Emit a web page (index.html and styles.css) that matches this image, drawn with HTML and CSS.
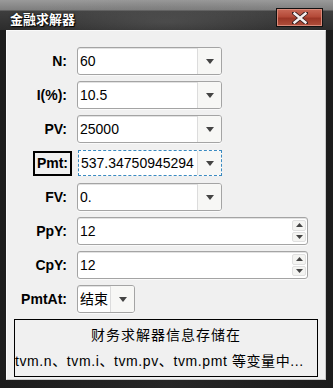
FILE: index.html
```html
<!DOCTYPE html>
<html>
<head>
<meta charset="utf-8">
<link rel="stylesheet" href="styles.css">
</head>
<body>
<div class="window">
  <div class="titlebar">
    <span class="title">金融求解器</span>
    <button class="close"><svg width="16" height="12" viewBox="0 0 16 12"><path d="M2 1 L14 11 M14 1 L2 11" stroke="#3a2020" stroke-width="4.2" stroke-linecap="square"/><path d="M2.5 1.5 L13.5 10.5 M13.5 1.5 L2.5 10.5" stroke="#f4f0f0" stroke-width="2.4" stroke-linecap="square"/></svg></button>
  </div>
  <div class="client">
    <div class="form">
      <span class="label">N:</span>
      <div class="field combo"><span class="value">60</span><span class="drop"><svg width="8" height="5" viewBox="0 0 8 5"><polygon points="0,0 8,0 4,5" fill="#444"/></svg></span></div>

      <span class="label">I(%):</span>
      <div class="field combo"><span class="value">10.5</span><span class="drop"><svg width="8" height="5" viewBox="0 0 8 5"><polygon points="0,0 8,0 4,5" fill="#444"/></svg></span></div>

      <span class="label">PV:</span>
      <div class="field combo"><span class="value">25000</span><span class="drop"><svg width="8" height="5" viewBox="0 0 8 5"><polygon points="0,0 8,0 4,5" fill="#444"/></svg></span></div>

      <span class="label boxed">Pmt:</span>
      <div class="field combo focus"><span class="value">537.34750945294</span><span class="drop"><svg width="8" height="5" viewBox="0 0 8 5"><polygon points="0,0 8,0 4,5" fill="#444"/></svg></span></div>

      <span class="label">FV:</span>
      <div class="field combo"><span class="value">0.</span><span class="drop"><svg width="8" height="5" viewBox="0 0 8 5"><polygon points="0,0 8,0 4,5" fill="#444"/></svg></span></div>

      <span class="label">PpY:</span>
      <div class="field spin"><span class="value">12</span><span class="spinner"><span class="sb"><svg width="7" height="4" viewBox="0 0 7 4"><polygon points="0,4 7,4 3.5,0" fill="#444"/></svg></span><span class="sb"><svg width="7" height="4" viewBox="0 0 7 4"><polygon points="0,0 7,0 3.5,4" fill="#444"/></svg></span></span></div>

      <span class="label">CpY:</span>
      <div class="field spin"><span class="value">12</span><span class="spinner"><span class="sb"><svg width="7" height="4" viewBox="0 0 7 4"><polygon points="0,4 7,4 3.5,0" fill="#444"/></svg></span><span class="sb"><svg width="7" height="4" viewBox="0 0 7 4"><polygon points="0,0 7,0 3.5,4" fill="#444"/></svg></span></span></div>

      <span class="label">PmtAt:</span>
      <div class="field combo small"><span class="value cjk">结束</span><span class="drop"><svg width="8" height="5" viewBox="0 0 8 5"><polygon points="0,0 8,0 4,5" fill="#444"/></svg></span></div>
    </div>
    <div class="message">
      <div class="line1">财务求解器信息存储在</div>
      <div class="line2">tvm.n、tvm.i、tvm.pv、tvm.pmt 等变量中...</div>
    </div>
  </div>
</div>
</body>
</html>
```
FILE: styles.css
```css
html, body {
  margin: 0;
  padding: 0;
}
body {
  width: 333px;
  height: 388px;
  overflow: hidden;
  background: #1f1f1f;
  font-family: "Liberation Sans", Arial, "Noto Sans CJK SC", sans-serif;
}
.window {
  display: flex;
  flex-direction: column;
  height: 388px;
  background: linear-gradient(90deg, #1c1c1c 0, #262626 50%, #1c1c1c 100%);
}
.titlebar {
  height: 30px;
  display: flex;
  align-items: flex-start;
  justify-content: space-between;
  background:
    radial-gradient(ellipse 160px 26px at 50% 22px, rgba(120,120,120,0.35), rgba(0,0,0,0)),
    linear-gradient(#9a9a9a 0, #7e7e7e 10px, #3e3e3e 11px, #2c2c2c 30px);
}
.title {
  margin: 10px 0 0 10px;
  color: #fff;
  font-family: "Noto Sans CJK SC", sans-serif;
  font-size: 13px;
  font-weight: 700;
  line-height: 18px;
  text-shadow: 0 0 2px #000, 1px 1px 1px #000;
}
.close {
  margin: 8px 10px 0 0;
  width: 47px;
  height: 19px;
  padding: 0;
  border: 1px solid #111;
  box-shadow: inset 0 0 0 1px #d98a7a;
  background: linear-gradient(#c96a58 0, #b44a38 45%, #9c3626 55%, #b0503c 100%);
  display: flex;
  align-items: center;
  justify-content: center;
}
.close svg { display: block; }
.client {
  margin: 0 7px 0 6px;
  height: 350px;
  background: #f0f0f0;
  border-top: 1px solid #fafafa;
  border-left: 1px solid #fafafa;
  border-right: 1px solid #c8c8c8;
  border-bottom: 1px solid #c8c8c8;
  box-sizing: border-box;
  display: flex;
  flex-direction: column;
}
.form {
  display: grid;
  grid-template-columns: 60px auto;
  column-gap: 10px;
  row-gap: 6px;
  padding-top: 16px;
  align-items: center;
  justify-items: start;
}
.label {
  justify-self: end;
  font-size: 14px;
  font-weight: 700;
  color: #000;
}
.label.boxed {
  border: 2px solid #000;
  padding: 1px 2px 2px 2px;
  margin-right: -5px;
  line-height: 18px;
}
.field {
  height: 28px;
  box-sizing: border-box;
  background: #fff;
  border: 1px solid #a4a4a4;
  border-radius: 3px;
  box-shadow: inset 0 1px 0 #e2e2e2, 0 1px 0 #fafafa;
  display: flex;
  align-items: stretch;
}
.combo { width: 145px; }
.spin { width: 231px; }
.small { width: 58px; }
.value {
  flex: 1;
  padding-left: 2px;
  font-size: 14px;
  line-height: 26px;
  color: #000;
  white-space: nowrap;
  overflow: hidden;
}
.value.cjk {
  font-family: "Noto Sans CJK SC", sans-serif;
  font-size: 14px;
  line-height: 25px;
}
.drop {
  width: 23px;
  background: #f7f7f5;
  border-left: 1px solid #dcdcdc;
  border-radius: 0 2px 2px 0;
  display: flex;
  align-items: center;
  justify-content: center;
}
.drop svg { display: block; }
.focus {
  height: 26px;
  margin: 1px 0 1px 1px;
  width: 144px;
  border: 1px dashed #3a8ac0;
  border-radius: 0;
  box-shadow: none;
}
.focus .value { line-height: 24px; }
.spinner {
  width: 14px;
  margin: 2px 1px 2px 0;
  display: flex;
  flex-direction: column;
  gap: 1px;
}
.sb {
  flex: 1;
  background: #f4f4f2;
  border: 1px solid #e0e0e0;
  border-radius: 2px;
  display: flex;
  align-items: center;
  justify-content: center;
}
.sb svg { display: block; }
.message {
  margin: 6px 7px 0 7px;
  height: 58px;
  box-sizing: border-box;
  border: 1px solid #000;
  font-family: "Liberation Sans", Arial, "Noto Sans CJK SC", sans-serif;
  font-size: 14px;
  color: #000;
  overflow: hidden;
}
.line1 {
  text-align: center;
  margin-top: 6px;
  line-height: 18px;
  letter-spacing: 1px;
}
.line2 {
  margin-top: 8px;
  line-height: 18px;
  white-space: nowrap;
  letter-spacing: 0.6px;
}
```
